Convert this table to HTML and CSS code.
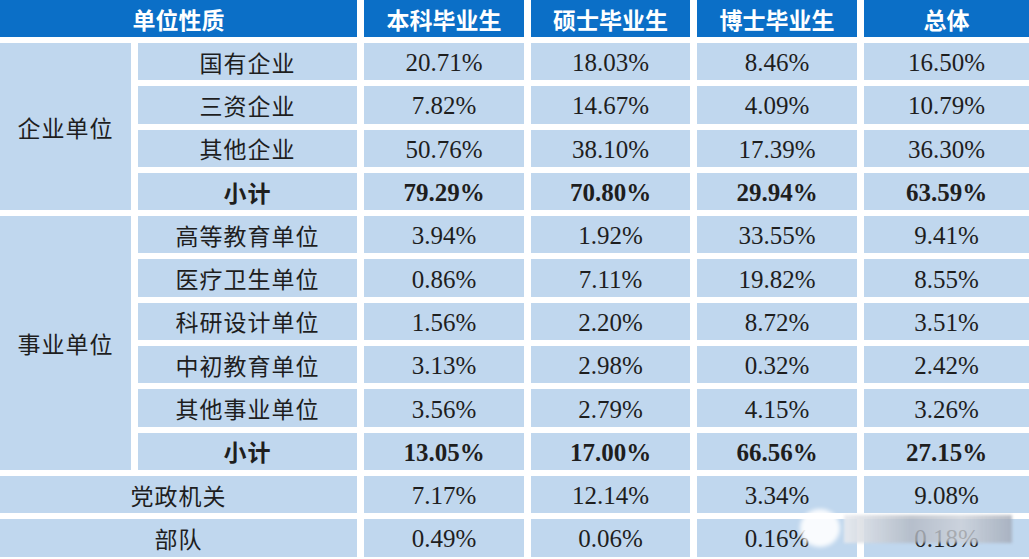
FILE: index.html
```html
<!DOCTYPE html>
<html lang="zh">
<head>
<meta charset="utf-8">
<title>单位性质</title>
<link rel="stylesheet" href="styles.css">
</head>
<body>
<div class="page">
  <div class="grid">
    <div class="cell head span2">单位性质</div>
    <div class="cell head">本科毕业生</div>
    <div class="cell head">硕士毕业生</div>
    <div class="cell head">博士毕业生</div>
    <div class="cell head">总体</div>

    <div class="cell zh group g1">企业单位</div>
    <div class="cell zh">国有企业</div>
    <div class="cell num">20.71%</div><div class="cell num">18.03%</div><div class="cell num">8.46%</div><div class="cell num">16.50%</div>
    <div class="cell zh">三资企业</div>
    <div class="cell num">7.82%</div><div class="cell num">14.67%</div><div class="cell num">4.09%</div><div class="cell num">10.79%</div>
    <div class="cell zh">其他企业</div>
    <div class="cell num">50.76%</div><div class="cell num">38.10%</div><div class="cell num">17.39%</div><div class="cell num">36.30%</div>
    <div class="cell zh bold">小计</div>
    <div class="cell num bold">79.29%</div><div class="cell num bold">70.80%</div><div class="cell num bold">29.94%</div><div class="cell num bold">63.59%</div>

    <div class="cell zh group g2">事业单位</div>
    <div class="cell zh">高等教育单位</div>
    <div class="cell num">3.94%</div><div class="cell num">1.92%</div><div class="cell num">33.55%</div><div class="cell num">9.41%</div>
    <div class="cell zh">医疗卫生单位</div>
    <div class="cell num">0.86%</div><div class="cell num">7.11%</div><div class="cell num">19.82%</div><div class="cell num">8.55%</div>
    <div class="cell zh">科研设计单位</div>
    <div class="cell num">1.56%</div><div class="cell num">2.20%</div><div class="cell num">8.72%</div><div class="cell num">3.51%</div>
    <div class="cell zh">中初教育单位</div>
    <div class="cell num">3.13%</div><div class="cell num">2.98%</div><div class="cell num">0.32%</div><div class="cell num">2.42%</div>
    <div class="cell zh">其他事业单位</div>
    <div class="cell num">3.56%</div><div class="cell num">2.79%</div><div class="cell num">4.15%</div><div class="cell num">3.26%</div>
    <div class="cell zh bold">小计</div>
    <div class="cell num bold">13.05%</div><div class="cell num bold">17.00%</div><div class="cell num bold">66.56%</div><div class="cell num bold">27.15%</div>

    <div class="cell zh span2">党政机关</div>
    <div class="cell num">7.17%</div><div class="cell num">12.14%</div><div class="cell num">3.34%</div><div class="cell num">9.08%</div>
    <div class="cell zh span2">部队</div>
    <div class="cell num">0.49%</div><div class="cell num">0.06%</div><div class="cell num">0.16%</div><div class="cell num">0.18%</div>
  </div>
  <div class="watermark">
    <span class="wm-logo"></span>
    <span class="wm-text"></span>
  </div>
</div>
</body>
</html>
```
FILE: styles.css
```css
html, body {
  margin: 0;
  padding: 0;
  background: #ffffff;
}
.page {
  position: relative;
  width: 1029px;
  height: 559px;
  overflow: hidden;
}
.grid {
  display: grid;
  grid-template-columns: 131px 219px 160px 159px 160px 165px;
  grid-template-rows: 37px;
  grid-auto-rows: 37.3px;
  column-gap: 7px;
  row-gap: 6px;
}
.cell {
  background: #c0d7ee;
  display: flex;
  align-items: center;
  justify-content: center;
  color: #1e1e1e;
  white-space: nowrap;
}
.head {
  background: #0b6fc7;
  color: #ffffff;
  font-family: "Noto Sans CJK SC", "Noto Sans", sans-serif;
  font-weight: 700;
  font-size: 23px;
}
.span2 {
  grid-column: span 2;
}
.zh {
  font-family: "Noto Sans CJK SC", sans-serif;
  font-size: 23px;
  font-weight: 400;
  letter-spacing: 1px;
}
.num {
  font-family: "Liberation Serif", "Times New Roman", serif;
  font-size: 25px;
  padding-top: 3px;
}
.bold {
  font-weight: 700;
}
.group {
  grid-column: 1;
}
.g1 {
  grid-row: 2 / span 4;
}
.g2 {
  grid-row: 6 / span 6;
}
.watermark {
  position: absolute;
  left: 800px;
  top: 505px;
  width: 215px;
  height: 45px;
  pointer-events: none;
}
.wm-logo {
  position: absolute;
  left: 0;
  top: 4px;
  width: 40px;
  height: 38px;
  border-radius: 50%;
  background: rgba(255, 255, 255, 0.9);
  filter: blur(2px);
}
.wm-text {
  position: absolute;
  left: 44px;
  top: 10px;
  width: 168px;
  height: 28px;
  background: linear-gradient(90deg, rgba(232,234,238,0.9), rgba(178,184,194,0.8) 40%, rgba(205,209,216,0.8) 70%, rgba(160,166,178,0.75));
  filter: blur(1.5px);
}
```
